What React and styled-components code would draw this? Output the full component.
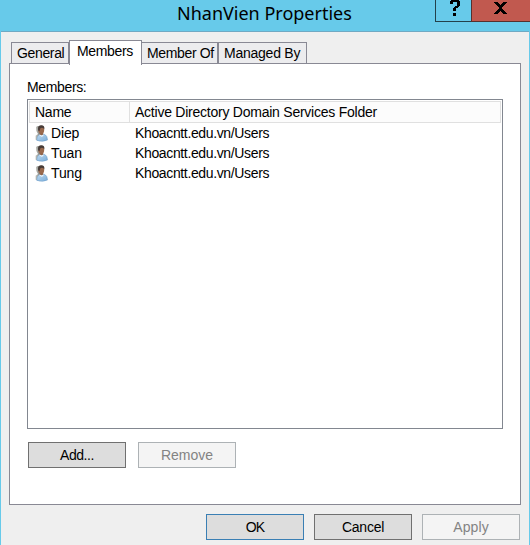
import React from "react";
import styled, { createGlobalStyle } from "styled-components";

const GlobalStyle = createGlobalStyle`
  * { box-sizing: border-box; }
  body { margin: 0; overflow: hidden; }
`;

const Window = styled.div`
  width: 530px;
  height: 545px;
  display: flex;
  flex-direction: column;
  overflow: hidden;
  background: #67caea;
  font: 14px/20px "Liberation Sans", Arial, sans-serif;
  letter-spacing: -0.36px;
  color: #000;
`;

const TitleBar = styled.header`
  height: 31px;
  flex: none;
  display: flex;
  align-items: flex-start;
`;

const Title = styled.h1`
  margin: 0 0 0 177px;
  width: 258px;
  font: 400 18px/27px "Noto Sans", "Open Sans", sans-serif;
  white-space: nowrap;
  letter-spacing: 0;
`;

const CaptionButton = styled.button`
  width: ${(p) => p.$width}px;
  height: 22px;
  padding: 0;
  border: solid ${(p) => (p.$close ? "#57302e" : "#23414b")};
  border-width: 0 0 1px 1px;
  background: ${(p) => (p.$close ? "#c1594f" : "#67caea")};

  svg { display: block; }
`;

const Client = styled.main`
  flex: 1;
  margin: 0 1px;
  padding: 8px 8px 0;
  border-top: 1px solid #70a9c3;
  background: #efefef;
`;

const TabStrip = styled.nav`
  height: 23px;
  padding-left: 2px;
  display: flex;
  align-items: flex-end;
`;

const Tab = styled.div`
  width: ${(p) => p.$width}px;
  height: ${(p) => (p.$active ? 25 : 21)}px;
  padding-left: ${(p) => (p.$active ? 7 : 5)}px;
  border: 1px solid #898994;
  border-bottom: 0;
  border-left-width: ${(p) => (p.$joined ? 0 : 1)}px;
  background: ${(p) => (p.$active ? "#fff" : "#ececee")};
  line-height: ${(p) => (p.$active ? 20 : 21)}px;
  white-space: nowrap;
  letter-spacing: ${(p) => p.$tracking ?? -0.35}px;
  ${(p) => p.$active && "margin-bottom: -2px; position: relative; z-index: 1;"}
`;

const Page = styled.section`
  width: 512px;
  height: 442px;
  padding: 14px 17px 0;
  border: 1px solid #898994;
  background: #fff;
`;

const Label = styled.div`
  height: 21px;
  line-height: 18px;
`;

const List = styled.div`
  width: 476px;
  height: 330px;
  padding: 1px;
  border: 1px solid #828790;
  background: #fff;
`;

const HeaderRow = styled.div`
  display: flex;
  height: 22px;
  margin-bottom: 1px;
  border: 1px solid #e0e0e0;
  background: #fcfcfc;
`;

const HeaderCell = styled.div`
  width: ${(p) => p.$width}px;
  padding-left: 5px;
  border-right: ${(p) => (p.$last ? "0" : "1px solid #e0e0e0")};
  line-height: 21px;
  white-space: nowrap;
  letter-spacing: -0.24px;
`;

const Row = styled.div`
  height: 20px;
  display: flex;
  line-height: 19px;
`;

const NameCell = styled.div`
  width: 106px;
  padding-left: 6px;
  display: flex;
  gap: 3px;
  letter-spacing: -0.15px;

  svg { flex: none; margin-top: 1px; }
`;

const Actions = styled.div`
  display: flex;
  gap: ${(p) => p.$gap}px;
  padding: ${(p) => p.$padding};
`;

const variants = {
  normal: ["#707070", "#dddddd", "#000"],
  primary: ["#3a7fb4", "#dddddd", "#000"],
  disabled: ["#adb2b5", "#f4f4f4", "#838383"],
};

const Button = styled.button`
  width: 98px;
  height: 26px;
  padding: 0;
  border: 1px solid ${(p) => variants[p.$variant][0]};
  border-radius: 0;
  background: ${(p) => variants[p.$variant][1]};
  color: ${(p) => variants[p.$variant][2]};
  font: inherit;
  letter-spacing: ${(p) => p.$tracking ?? -0.25}px;
`;

function UserIcon() {
  return (
    <svg width="13" height="17" viewBox="0 0 13 17">
      <defs>
        <linearGradient id="coat" x1="0" y1="0" x2="1" y2="1">
          <stop offset="0" stopColor="#c3dbee" />
          <stop offset="1" stopColor="#78addb" />
        </linearGradient>
        <linearGradient id="shade" x1="0" y1="0" x2="1" y2="0">
          <stop offset="0" stopColor="#c4c3bb" />
          <stop offset="1" stopColor="#727a7d" />
        </linearGradient>
      </defs>
      <path d="M1 2.2Q1.6 .8 4 1L5 7L6 10L3 15.4L.6 14.8V10.8L3 9Q.6 6 1 2.2Z" fill="url(#shade)" />
      <path d="M1.8 15.4Q1.4 11 4.4 9.8L7 8.7L9.8 9.5Q12.4 10.8 12.5 15Q8 17.4 1.8 15.4Z" fill="url(#coat)" stroke="#6c9cc8" strokeWidth=".5" />
      <path d="M4.6 7H8.2V9.4L6.6 10.6L4.6 9.4Z" fill="#906348" />
      <path d="M4.6 9.6L6.7 10.6L8.4 9.4L8.7 10.3L7 12L4.5 10.6Z" fill="#e8f3fb" />
      <ellipse cx="6.2" cy="4.7" rx="3" ry="4" fill="#99694d" />
      <path d="M3.1 5.2Q2.4 .2 6.3 .2Q10 .4 9.3 4.2L8.7 3.4Q7 2.4 5.4 3.2L4.4 6.2Z" fill="#473c38" />
    </svg>
  );
}

function HelpIcon() {
  return (
    <svg width="35" height="21" viewBox="0 0 35 21" shapeRendering="crispEdges">
      <path d="M15 0h8v1h1v5h-1v1h-1v1h-2v3h-3V8h1V7h1V6h2V2h-4v2h-3V1h1Z M17 13h3v3h-3Z" fill="#000" />
    </svg>
  );
}

function CloseIcon() {
  return (
    <svg width="58" height="21" viewBox="0 0 58 21" shapeRendering="crispEdges">
      <path d="M22 2h4v1h1v1h1v1h1V4h1V3h1V2h4v1h-1v1h-1v1h-1v1h-1v1h-1v2h1v1h1v1h1v1h1v1h1v1h-4v-1h-1v-1h-1v-1h-1v1h-1v1h-1v1h-4v-1h1v-1h1v-1h1v-1h1v-1h1V7h-1V6h-1V5h-1V4h-1V3h-1Z" fill="#000" />
    </svg>
  );
}

const members = ["Diep", "Tuan", "Tung"];

export default function App() {
  return (
    <>
      <GlobalStyle />
      <Window>
        <TitleBar>
          <Title>NhanVien Properties</Title>
          <CaptionButton $width={36} aria-label="Help"><HelpIcon /></CaptionButton>
          <CaptionButton $width={59} $close aria-label="Close"><CloseIcon /></CaptionButton>
        </TitleBar>
        <Client>
          <TabStrip>
            <Tab $width={58}>General</Tab>
            <Tab $width={73} $active>Members</Tab>
            <Tab $width={76} $joined>Member Of</Tab>
            <Tab $width={89} $tracking={-0.24}>Managed By</Tab>
          </TabStrip>
          <Page>
            <Label>Members:</Label>
            <List>
              <HeaderRow>
                <HeaderCell $width={100}>Name</HeaderCell>
                <HeaderCell $last>Active Directory Domain Services Folder</HeaderCell>
              </HeaderRow>
              {members.map((name) => (
                <Row key={name}>
                  <NameCell><UserIcon />{name}</NameCell>
                  <div>Khoacntt.edu.vn/Users</div>
                </Row>
              ))}
            </List>
            <Actions $gap={12} $padding="13px 0 0 1px">
              <Button $variant="normal" $tracking={-0.45}>Add...</Button>
              <Button $variant="disabled" $tracking={0}>Remove</Button>
            </Actions>
          </Page>
          <Actions $gap={10} $padding="9px 0 0 197px">
            <Button $variant="primary" $tracking={-0.8}>OK</Button>
            <Button $variant="normal">Cancel</Button>
            <Button $variant="disabled" $tracking={0.1}>Apply</Button>
          </Actions>
        </Client>
      </Window>
    </>
  );
}
